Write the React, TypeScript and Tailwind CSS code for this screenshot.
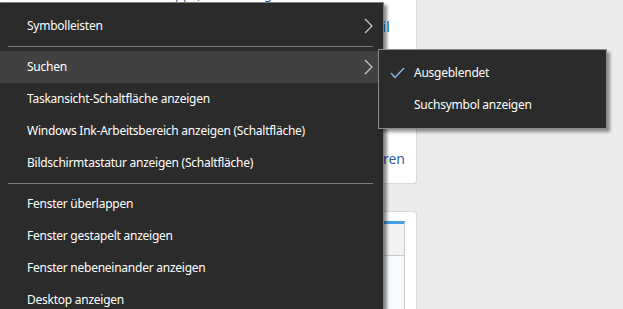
import React from "react";

const Chevron = () => (
  <svg width="9" height="16" viewBox="0 0 9 16" className="block">
    <polyline points="1,1 8,8 1,15" fill="none" stroke="#c9d3dc" strokeWidth="1.1" />
  </svg>
);

const Check = () => (
  <svg width="15" height="12" viewBox="0 0 15 12" className="block">
    <polyline points="1,6 5,10.5 14,1" fill="none" stroke="#8fbbe8" strokeWidth="1.3" />
  </svg>
);

const Row = ({ label, highlight, sub }: { label: string; highlight?: boolean; sub?: boolean }) => (
  <div
    className={`flex h-[32px] items-center pl-[27px] pr-[10px] ${highlight ? "bg-[#414141]" : ""}`}
  >
    <span className="flex-1 whitespace-nowrap">{label}</span>
    {sub && <Chevron />}
  </div>
);

const Sep = () => (
  <div className="py-[4px] pl-[8px] pr-[10px]">
    <div className="h-px bg-[#7c7c7c]" />
  </div>
);

export default function App() {
  return (
    <div
      className="relative h-[309px] w-[623px] overflow-hidden bg-[#ebebeb]"
      style={{ fontFamily: '"Noto Sans", "Open Sans", sans-serif' }}
    >
      {/* background page */}
      <div className="flex w-[417px] flex-col">
        <div className="h-[184px] rounded-br-[4px] border-r border-b border-[#d9d9d9] bg-white">
          <div className="-mt-[14px] whitespace-nowrap text-[13px] leading-[16px] text-[#3b5da8]">
            Über die Suche können Sie Apps, Einstellungen und Dateien finden
          </div>
          <div className="mt-[13px] flex justify-end pr-[26px] text-[15px] text-[#1a73c9]">Profil</div>
          <div className="mt-[110px] flex justify-end pr-[11px] text-[14px] text-[#2f5fb3]">Personalisieren</div>
        </div>
        <div className="mt-[27px] h-[120px] rounded-tr-[4px] border-t border-r border-[#d9d9d9] bg-white pr-[11px] pt-[9px]">
          <div className="h-full border-r border-[#c8c8c8] border-t-[3px] border-t-[#43a0e6]">
            <div className="h-[32px] border-b border-[#c8c8c8] bg-[#f3f3f3]" />
            <div className="h-full bg-[#f6f9fd]" />
          </div>
        </div>
      </div>

      {/* main context menu */}
      <div className="absolute -left-[1px] top-[2px] w-[385px] border border-[#7d7d7d] bg-[#2b2b2b] pt-[7px] text-[12px] tracking-[-0.25px] text-white shadow-[3px_3px_3px_rgba(0,0,0,0.45)]">
        <Row label="Symbolleisten" sub />
        <Sep />
        <Row label="Suchen" highlight sub />
        <Row label="Taskansicht-Schaltfläche anzeigen" />
        <Row label="Windows Ink-Arbeitsbereich anzeigen (Schaltfläche)" />
        <Row label="Bildschirmtastatur anzeigen (Schaltfläche)" />
        <Sep />
        <Row label="Fenster überlappen" />
        <Row label="Fenster gestapelt anzeigen" />
        <Row label="Fenster nebeneinander anzeigen" />
        <Row label="Desktop anzeigen" />
      </div>

      {/* submenu */}
      <div className="absolute left-[378px] top-[49px] w-[229px] border border-[#8a8a8a] bg-[#2b2b2b] pt-[7px] pb-[7px] text-[12px] tracking-[-0.25px] text-white shadow-[3px_3px_3px_rgba(0,0,0,0.4)]">
        <div className="flex h-[32px] items-center pl-[11px]">
          <div className="w-[24px]">
            <Check />
          </div>
          <span>Ausgeblendet</span>
        </div>
        <div className="flex h-[32px] items-center pl-[35px]">
          <span>Suchsymbol anzeigen</span>
        </div>
      </div>
    </div>
  );
}
